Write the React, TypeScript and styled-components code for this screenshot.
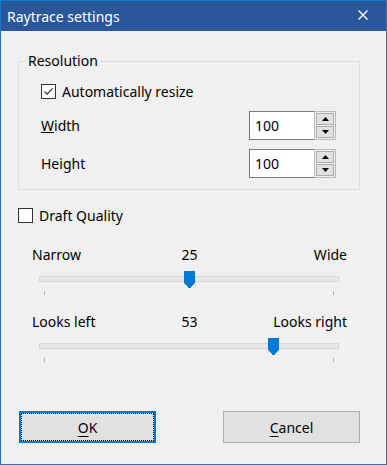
import styled, { createGlobalStyle } from 'styled-components'

const GlobalStyle = createGlobalStyle`
  html, body {
    margin: 0;
    padding: 0;
    background: #f0f0f0;
  }
  body {
    font-family: 'Noto Sans', 'Open Sans', sans-serif;
    font-size: 14px;
    color: #000;
  }
`

type SliderSpec = { left: string; right: string; value: number; max: number }

const sliders: SliderSpec[] = [
  { left: 'Narrow', right: 'Wide', value: 25, max: 50 },
  { left: 'Looks left', right: 'Looks right', value: 53, max: 67 },
]

const CloseIcon = () => (
  <svg width="10" height="10" viewBox="0 0 10 10">
    <path d="M0.5 0.5 L9.5 9.5 M9.5 0.5 L0.5 9.5" stroke="#fff" strokeWidth="1.4" />
  </svg>
)

const Check = () => (
  <svg width="13" height="13" viewBox="0 0 13 13">
    <path d="M2.5 6.5 L5.2 9.2 L10.6 3.4" stroke="#333" strokeWidth="1.2" fill="none" />
  </svg>
)

const ThumbShape = () => (
  <svg width="11" height="17" viewBox="0 0 11 17">
    <path d="M0 0 H11 V12 L7 16 V17 H4 V16 L0 12 Z" fill="#0078d7" />
  </svg>
)

const Arrow = ({ up }: { up?: boolean }) => (
  <svg width="7" height="4" viewBox="0 0 7 4">
    <path d={up ? 'M0 4 L3.5 0 L7 4 Z' : 'M0 0 L7 0 L3.5 4 Z'} fill="#000" />
  </svg>
)

const Spinner = ({ value }: { value: number }) => (
  <SpinBox>
    <SpinInput>{value}</SpinInput>
    <SpinButtons>
      <SpinButton>
        <Arrow up />
      </SpinButton>
      <SpinButton>
        <Arrow />
      </SpinButton>
    </SpinButtons>
  </SpinBox>
)

const Slider = ({ left, right, value, max }: SliderSpec) => (
  <SliderBlock>
    <SliderLabels>
      <span>{left}</span>
      <ValueLabel>{value}</ValueLabel>
      <RightLabel>{right}</RightLabel>
    </SliderLabels>
    <TrackArea>
      <Track />
      <Thumb style={{ left: `calc(${(value / max) * 100}% - 5px)` }}>
        <ThumbShape />
      </Thumb>
    </TrackArea>
    <Ticks>
      <Tick />
      <Tick />
    </Ticks>
  </SliderBlock>
)

export default function App() {
  return (
    <>
      <GlobalStyle />
      <Window>
        <TitleBar>
          <Title>Raytrace settings</Title>
          <CloseButton>
            <CloseIcon />
          </CloseButton>
        </TitleBar>
        <Body>
          <GroupBox>
            <Legend>Resolution</Legend>
            <GroupGrid>
              <CheckRow>
                <CheckBox>
                  <Check />
                </CheckBox>
                Automatically resize
              </CheckRow>
              <FieldRow>
                <span>
                  <u>W</u>idth
                </span>
                <Spinner value={100} />
              </FieldRow>
              <FieldRow>
                <span>Height</span>
                <Spinner value={100} />
              </FieldRow>
            </GroupGrid>
          </GroupBox>

          <DraftRow>
            <CheckBox />
            Draft Quality
          </DraftRow>

          <Sliders>
            {sliders.map((s) => (
              <Slider key={s.left} {...s} />
            ))}
          </Sliders>

          <ButtonRow>
            <Button $default>
              <u>O</u>K
            </Button>
            <Button>
              <u>C</u>ancel
            </Button>
          </ButtonRow>
        </Body>
      </Window>
    </>
  )
}

const Window = styled.div`
  width: 387px;
  height: 465px;
  box-sizing: border-box;
  border: 1px solid #1979ca;
  display: flex;
  flex-direction: column;
  background: #f0f0f0;
`

const TitleBar = styled.div`
  height: 30px;
  flex: none;
  background: #2b579a;
  display: flex;
  align-items: center;
  justify-content: space-between;
  padding: 0 18px 0 6px;
`

const Title = styled.span`
  color: #fff;
  font-size: 14px;
`

const CloseButton = styled.div`
  display: flex;
  align-items: center;
  margin-top: -2px;
`

const Body = styled.div`
  flex: 1;
  display: flex;
  flex-direction: column;
  padding: 20px 26px 0 17px;
`

const GroupBox = styled.fieldset`
  margin: 0;
  padding: 0;
  border: 1px solid #dcdcdc;
  min-width: 0;
`

const Legend = styled.legend`
  margin-left: 7px;
  padding: 0 2px;
  line-height: 20px;
  font-size: 14px;
`

const GroupGrid = styled.div`
  display: grid;
  grid-template-rows: 22px 29px 29px;
  row-gap: 9px;
  padding: 9px 23px 11px 22px;
`

const CheckRow = styled.div`
  display: flex;
  align-items: center;
  gap: 6px;
`

const CheckBox = styled.div`
  width: 15px;
  height: 15px;
  box-sizing: border-box;
  border: 1px solid #333;
  background: #fff;
  display: flex;
  align-items: center;
  justify-content: center;
`

const FieldRow = styled.div`
  display: flex;
  align-items: center;
  justify-content: space-between;
`

const SpinBox = styled.div`
  display: flex;
  height: 29px;
`

const SpinInput = styled.div`
  width: 65px;
  box-sizing: border-box;
  border: 1px solid #7a7a7a;
  border-right: none;
  background: #fff;
  display: flex;
  align-items: center;
  padding-left: 5px;
`

const SpinButtons = styled.div`
  width: 22px;
  box-sizing: border-box;
  border: 1px solid #b9b9b9;
  display: flex;
  flex-direction: column;
  gap: 1px;
  padding: 1px;
`

const SpinButton = styled.div`
  flex: 1;
  box-sizing: border-box;
  border: 1px solid #adadad;
  background: #e1e1e1;
  display: flex;
  align-items: center;
  justify-content: center;
`

const DraftRow = styled.div`
  display: flex;
  align-items: center;
  gap: 6px;
  height: 22px;
  margin-top: 14px;
`

const Sliders = styled.div`
  display: flex;
  flex-direction: column;
  gap: 16px;
  margin: 18px 13px 0 14px;
`

const SliderBlock = styled.div`
  display: flex;
  flex-direction: column;
`

const SliderLabels = styled.div`
  height: 20px;
  display: grid;
  grid-template-columns: 1fr auto 1fr;
  align-items: center;
`

const ValueLabel = styled.span`
  text-align: center;
`

const RightLabel = styled.span`
  text-align: right;
`

const TrackArea = styled.div`
  position: relative;
  height: 18px;
  margin: 7px 13px 0 12px;
  display: flex;
  align-items: center;
`

const Track = styled.div`
  flex: 1;
  height: 4px;
  margin: 0 -5px;
  border: 1px solid #d6d6d6;
  background: #e7e7e7;
  margin-top: -3px;
`

const Thumb = styled.div`
  position: absolute;
  top: 0;
  height: 17px;
`

const Ticks = styled.div`
  display: flex;
  justify-content: space-between;
  margin: 2px 13px 0 12px;
`

const Tick = styled.div`
  width: 1px;
  height: 4px;
  background: #b0b0b0;
`

const ButtonRow = styled.div`
  display: flex;
  justify-content: space-between;
  margin-top: auto;
  margin-bottom: 21px;
  padding-left: 1px;
`

const Button = styled.div<{ $default?: boolean }>`
  width: 137px;
  height: 32px;
  box-sizing: border-box;
  background: #e1e1e1;
  border: ${(p) => (p.$default ? '2px solid #0078d7' : '1px solid #adadad')};
  outline: ${(p) => (p.$default ? '1px dotted #000' : 'none')};
  outline-offset: -3px;
  display: flex;
  align-items: center;
  justify-content: center;
  u {
    text-underline-offset: 3px;
  }
`
